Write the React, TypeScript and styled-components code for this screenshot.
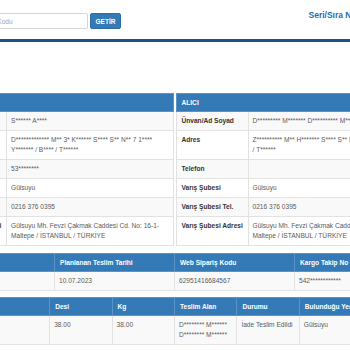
import styled, { createGlobalStyle } from "styled-components";

const GlobalStyle = createGlobalStyle`
  html, body {
    margin: 0;
    padding: 0;
    background: #ffffff;
    overflow: hidden;
  }
  body {
    font-family: "Liberation Sans", Arial, sans-serif;
    font-size: 6.6px;
    line-height: 10px;
    color: #555555;
  }
`;

interface InfoRow {
  label: string;
  value: string;
}

const senderRows: InfoRow[] = [
  { label: "Ünvan/Ad Soyad", value: "S****** A****" },
  {
    label: "Adres",
    value: "D************* M** 3* K****** S**** S** N** 7 1**** Y******* / B**** / T******",
  },
  { label: "Telefon", value: "53********" },
  { label: "Çıkış Şubesi", value: "Gülsuyu" },
  { label: "Çıkış Şubesi Tel.", value: "0216 376 0395" },
  {
    label: "Çıkış Şubesi Adresi",
    value: "Gülsuyu Mh. Fevzi Çakmak Caddesi Cd. No: 16-1- Maltepe / İSTANBUL / TÜRKİYE",
  },
];

const receiverRows: InfoRow[] = [
  { label: "Ünvan/Ad Soyad", value: "D********* M******* D********** M*******" },
  { label: "Adres", value: "Z********** M** H******* S**** S** N** 1 D************ /\u00a0T******" },
  { label: "Telefon", value: "" },
  { label: "Varış Şubesi", value: "Gülsuyu" },
  { label: "Varış Şubesi Tel.", value: "0216 376 0395" },
  {
    label: "Varış Şubesi Adresi",
    value: "Gülsuyu Mh. Fevzi Çakmak Caddesi Cd. No: 16-1- Maltepe / İSTANBUL / TÜRKİYE",
  },
];

const InfoTable = ({ title, rows }: { title: string; rows: InfoRow[] }) => (
  <Table>
    <colgroup>
      <col style={{ width: 72 }} />
      <col />
    </colgroup>
    <thead>
      <tr>
        <Th colSpan={2}>{title}</Th>
      </tr>
    </thead>
    <tbody>
      {rows.map((row) => (
        <tr key={row.label}>
          <LabelTd>{row.label}</LabelTd>
          <Td>{row.value}</Td>
        </tr>
      ))}
    </tbody>
  </Table>
);

export default function App() {
  return (
    <>
      <GlobalStyle />
      <Page>
        <TopBar>
          <SearchForm>
            <SearchInput placeholder="Web Sipariş Kodu" />
            <SearchButton>GETİR</SearchButton>
          </SearchForm>
          <SerialForm>
            <SerialLabel>Seri/Sıra No</SerialLabel>
            <SearchInput placeholder="" />
          </SerialForm>
        </TopBar>

        <InfoGrid>
          <InfoTable title="GÖNDERİCİ" rows={senderRows} />
          <InfoTable title="ALICI" rows={receiverRows} />
        </InfoGrid>

        <Table $spaced>
          <thead>
            <tr>
              <Th $w="25%">Gönderi Tarihi</Th>
              <Th $w="25%">Planlanan Teslim Tarihi</Th>
              <Th $w="25%">Web Sipariş Kodu</Th>
              <Th $w="25%">Kargo Takip No</Th>
            </tr>
          </thead>
          <tbody>
            <tr>
              <Td>05.07.2023</Td>
              <Td>10.07.2023</Td>
              <Td>62951416684567</Td>
              <Td>542************</Td>
            </tr>
          </tbody>
        </Table>

        <Table>
          <thead>
            <tr>
              <Th $w="25%">Ödeme Yapan</Th>
              <Th $w="12.5%">Desi</Th>
              <Th $w="12.5%">Kg</Th>
              <Th $w="12.5%">Teslim Alan</Th>
              <Th $w="12.5%">Durumu</Th>
              <Th $w="25%">Bulunduğu Yer</Th>
            </tr>
          </thead>
          <tbody>
            <tr>
              <Td>Standart Özel</Td>
              <Td>38.00</Td>
              <Td>38.00</Td>
              <Td>D******** M****** D******** M******</Td>
              <Td>İade Teslim Edildi</Td>
              <Td>Gülsuyu</Td>
            </tr>
          </tbody>
        </Table>
      </Page>
    </>
  );
}

const Page = styled.div`
  width: 481px;
  margin-left: -66px;
`;

const TopBar = styled.div`
  display: grid;
  grid-template-columns: minmax(0, 1fr) minmax(0, 1fr);
  column-gap: 2px;
  height: 39px;
  border-bottom: 3px solid #1d4f91;
  margin-bottom: 51px;
`;

const SearchForm = styled.div`
  display: flex;
  align-items: flex-start;
  gap: 2px;
  padding: 13px 0 0 21px;
`;

const SearchInput = styled.input`
  box-sizing: border-box;
  flex: none;
  width: 133px;
  height: 16px;
  padding: 0 4px;
  border: 1px solid #d4d4d4;
  border-radius: 2px;
  font-family: "Liberation Sans", Arial, sans-serif;
  font-size: 6.6px;
  color: #555555;
  outline: none;

  &::placeholder {
    color: #a0a0a0;
  }
`;

const SearchButton = styled.button`
  box-sizing: border-box;
  flex: none;
  width: 31px;
  height: 16px;
  padding: 0;
  border: 1px solid #2e6da4;
  border-radius: 2px;
  background: #337ab7;
  color: #ffffff;
  font-family: "Liberation Sans", Arial, sans-serif;
  font-size: 6.5px;
  font-weight: 700;
`;

const SerialForm = styled.div`
  display: flex;
  align-items: flex-start;
  gap: 6px;
  padding: 10px 0 0 133px;
`;

const SerialLabel = styled.span`
  font-size: 8.5px;
  line-height: 10px;
  font-weight: 700;
  color: #2a6aae;
  white-space: nowrap;
`;

const InfoGrid = styled.div`
  display: grid;
  grid-template-columns: minmax(0, 1fr) minmax(0, 1fr);
  column-gap: 2px;
  align-items: start;
  margin-bottom: 7px;
`;

const Table = styled.table<{ $spaced?: boolean }>`
  width: 100%;
  border-collapse: collapse;
  table-layout: fixed;
  margin-bottom: ${({ $spaced }) => ($spaced ? "6px" : "0")};

  tbody tr:nth-child(odd) td {
    background: #f9f9f9;
  }
`;

const Th = styled.th<{ $w?: string }>`
  width: ${({ $w }) => $w || "auto"};
  padding: 4px 5px 3px;
  background: #337ab7;
  color: #ffffff;
  font-weight: 700;
  font-size: 6.6px;
  line-height: 10px;
  text-align: left;
  border: 1px solid #5b93c7;
  white-space: nowrap;
  overflow: hidden;
`;

const Td = styled.td`
  padding: 4px 4px;
  border: 1px solid #e2e2e2;
  vertical-align: top;
  color: #5a5a5a;
  background: #ffffff;
`;

const LabelTd = styled(Td)`
  padding: 4px 0 4px 5px;
  font-weight: 700;
  color: #333333;
  white-space: nowrap;
`;
